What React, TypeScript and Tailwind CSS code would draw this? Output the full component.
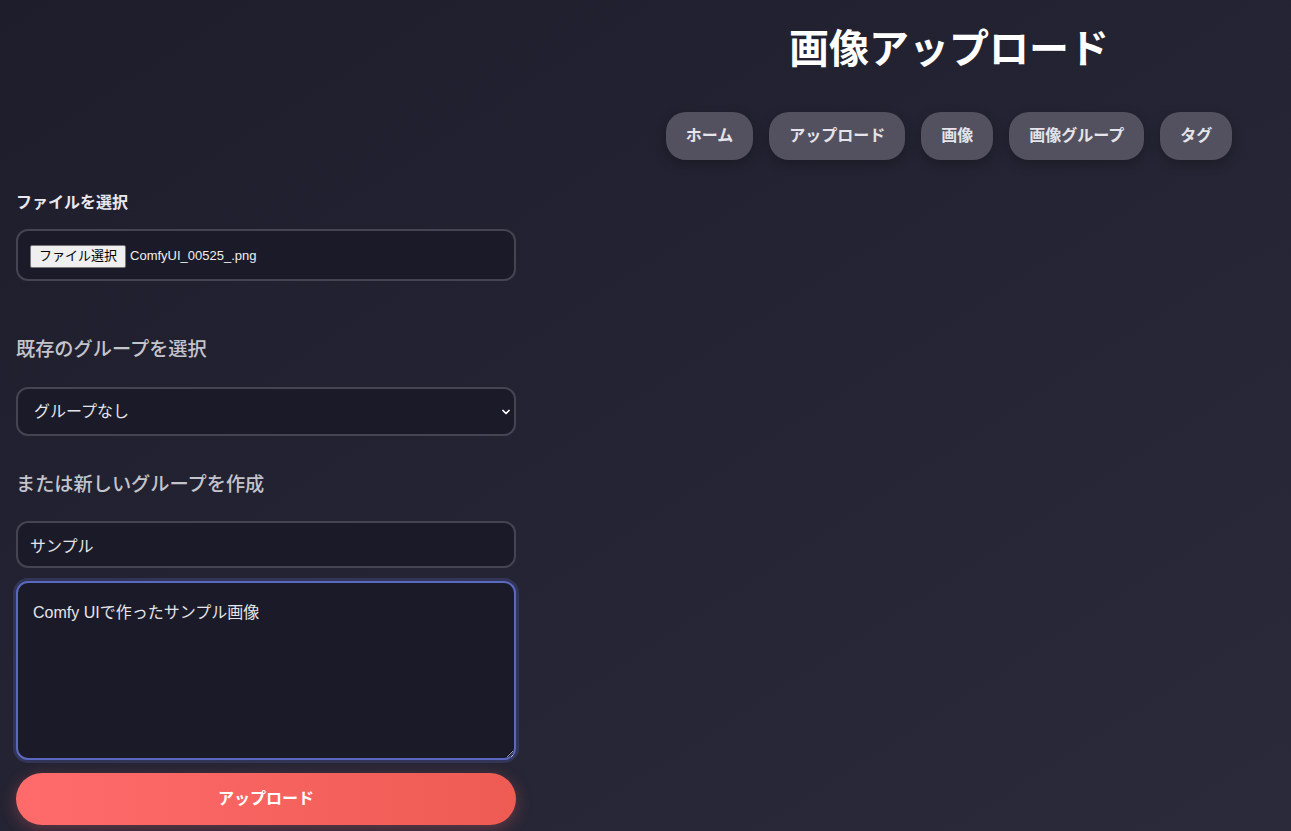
import { ChevronDown } from "lucide-react"

const navItems = ["ホーム", "アップロード", "画像", "画像グループ", "タグ"]

export default function App() {
  return (
    <div
      className="min-h-screen w-full bg-gradient-to-br from-[#1e1d2c] to-[#2b2a3a] text-[#e6e6ea]"
      style={{ fontFamily: '"Liberation Sans", Roboto, "Noto Sans CJK JP", sans-serif' }}
    >
      <header className="grid grid-cols-[607px_1fr]">
        <div />
        <div className="flex flex-col items-center pt-[25px]">
          <h1 className="text-[40px] leading-[48px] font-bold text-white">画像アップロード</h1>
          <nav className="mt-[39px] flex gap-4">
            {navItems.map((item) => (
              <a
                key={item}
                href="#"
                className="rounded-[20px] bg-[#53515f] px-5 py-3 text-base leading-6 font-bold text-[#e4e4ea] shadow-[0_4px_12px_rgba(0,0,0,0.25)]"
              >
                {item}
              </a>
            ))}
          </nav>
        </div>
      </header>

      <form className="w-[532px] px-4 pb-[6px]" onSubmit={(e) => e.preventDefault()}>
        <label className="mt-[31px] block text-base leading-6 font-bold text-[#e8e8ee]">ファイルを選択</label>
        <div className="mt-[14px] flex h-[52px] items-center gap-1 rounded-xl border-2 border-[#444452] bg-[#1b1a29] px-3 pt-[2px]">
          <span className="flex h-[23px] items-center rounded-[2px] border border-[#767676] bg-[#efefef] px-2 text-[13px] text-black">
            ファイル選択
          </span>
          <span className="text-[13px] text-[#f0f0f0]">ComfyUI_00525_.png</span>
        </div>

        <h2 className="mt-[54px] text-[19.2px] leading-[29px] font-medium text-[#c4c4cc]">既存のグループを選択</h2>
        <div className="relative mt-[23px]">
          <select className="h-[49px] w-full appearance-none rounded-xl border-2 border-[#444452] bg-[#1b1a29] px-4 text-base text-[#e6e6ea] outline-none">
            <option>グループなし</option>
          </select>
          <ChevronDown className="pointer-events-none absolute top-1/2 right-[4px] -translate-y-1/2 text-white" size={12} strokeWidth={3.5} />
        </div>

        <h2 className="mt-[34px] text-[19.2px] leading-[29px] font-medium text-[#c4c4cc]">または新しいグループを作成</h2>
        <input
          className="mt-[22px] h-[47px] w-full rounded-xl border-2 border-[#444452] bg-[#1b1a29] px-3 text-base text-[#e6e6ea] outline-none"
          defaultValue="サンプル"
        />
        <textarea
          className="mt-[13px] block h-[179px] w-full rounded-xl border-2 border-[#5a68c0] bg-[#1b1a29] px-[15px] py-[18px] text-base text-[#e6e6ea] outline-none ring-[3px] ring-[#3c4170]/60"
          defaultValue="Comfy UIで作ったサンプル画像"
        />
        <button
          type="submit"
          className="mt-[13px] h-[52px] w-full rounded-full bg-gradient-to-r from-[#ff6b6b] to-[#ee5b53] text-base font-bold text-white shadow-[0_4px_16px_rgba(255,107,107,0.3)]"
        >
          アップロード
        </button>
      </form>
    </div>
  )
}
